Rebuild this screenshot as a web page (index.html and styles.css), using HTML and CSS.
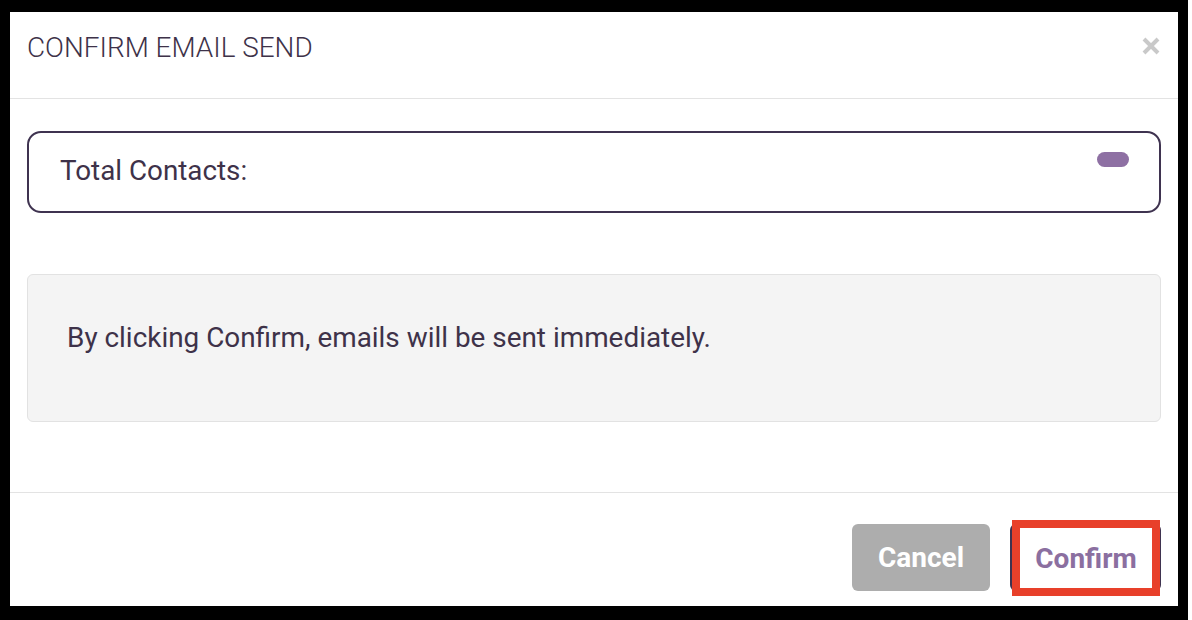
FILE: index.html
```html
<!DOCTYPE html>
<html lang="en">
<head>
<meta charset="utf-8">
<title>Confirm Email Send</title>
<link rel="stylesheet" href="styles.css">
</head>
<body>
<div class="frame">
  <div class="modal">
    <header class="modal-header">
      <h1 class="modal-title">CONFIRM EMAIL SEND</h1>
      <button class="close" aria-label="Close">
        <svg width="20" height="20" viewBox="0 0 20 20"><path d="M3 3 L17 17 M17 3 L3 17" stroke="#c9c9c9" stroke-width="4" stroke-linecap="butt"/></svg>
      </button>
    </header>
    <section class="modal-body">
      <div class="contacts">
        <span class="contacts-label">Total Contacts:</span>
        <span class="pill"></span>
      </div>
      <div class="notice">By clicking Confirm, emails will be sent immediately.</div>
    </section>
    <footer class="modal-footer">
      <button class="btn btn-cancel">Cancel</button>
      <button class="btn btn-confirm"><span class="highlight">Confirm</span></button>
    </footer>
  </div>
</div>
</body>
</html>
```
FILE: styles.css
```css
html, body {
  margin: 0;
  padding: 0;
  background: #ffffff;
}
body {
  font-family: Roboto, "Liberation Sans", sans-serif;
  color: #3e3249;
}
.frame {
  width: 1168px;
  height: 594px;
  border-style: solid;
  border-color: #000;
  border-width: 12px 10px 14px 10px;
  background: #fff;
}
.modal {
  display: flex;
  flex-direction: column;
  height: 100%;
}
.modal-header {
  height: 87px;
  box-sizing: border-box;
  padding: 20px 17px 0 17px;
  border-bottom: 1px solid #e3e3e3;
  display: flex;
  justify-content: space-between;
  align-items: flex-start;
}
.modal-title {
  margin: 0;
  font-size: 27.9px;
  line-height: 32px;
  font-weight: 300;
  color: #3e3249;
}
.close {
  border: 0;
  background: none;
  padding: 0;
  margin-top: 4px;
  width: 20px;
  height: 20px;
  display: block;
}
.close svg { display: block; }
.modal-body {
  padding: 32px 17px 0 17px;
  height: 394px;
  box-sizing: border-box;
  border-bottom: 1px solid #e3e3e3;
}
.contacts {
  height: 82px;
  box-sizing: border-box;
  border: 2px solid #3f3350;
  border-radius: 14px;
  display: flex;
  justify-content: space-between;
  align-items: flex-start;
  padding: 0 30px 0 31px;
}
.contacts-label {
  font-size: 27.8px;
  line-height: 32px;
  margin-top: 22px;
}
.pill {
  width: 32px;
  height: 15px;
  border-radius: 8px;
  background: #8e70a3;
  margin-top: 19px;
}
.notice {
  margin-top: 61px;
  height: 148px;
  box-sizing: border-box;
  background: #f4f4f4;
  border: 1px solid #e2e2e2;
  border-radius: 6px;
  padding: 47px 39px 0 39px;
  font-size: 27.9px;
  line-height: 32px;
}
.modal-footer {
  flex: 1;
  display: flex;
  justify-content: flex-end;
  align-items: flex-start;
  gap: 20px;
  padding: 31px 17px 0 17px;
}
.btn {
  height: 67px;
  border: 0;
  border-radius: 6px;
  font-family: Roboto, "Liberation Sans", sans-serif;
  font-size: 28px;
  font-weight: 700;
  padding: 0;
  cursor: pointer;
}
.btn-cancel {
  width: 138px;
  background: #adadad;
  color: #fff;
}
.btn-confirm {
  width: 151px;
  background: #3f3350;
  position: relative;
  color: #8b6fa0;
}
.highlight {
  position: absolute;
  left: 2px;
  right: 1px;
  top: -4px;
  bottom: -5px;
  border: 8px solid #e8402a;
  background: #fff;
  display: flex;
  align-items: center;
  justify-content: center;
  padding-left: 0;
}
```
